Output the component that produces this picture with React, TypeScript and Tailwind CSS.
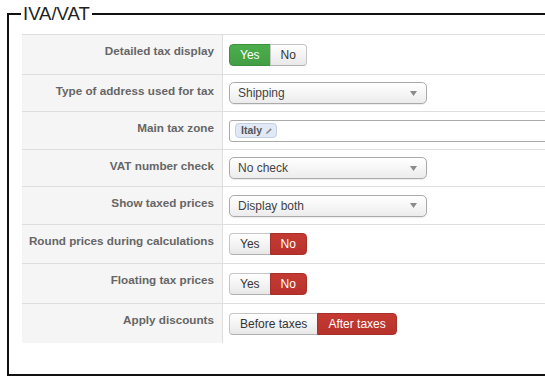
import React from "react";

type Control =
  | { kind: "toggle"; options: string[]; active: number; tone: "green" | "red" }
  | { kind: "select"; value: string }
  | { kind: "tags"; tags: string[] };

type Row = { label: string; h: string; control: Control };

const rows: Row[] = [
  { label: "Detailed tax display", h: "h-[40px]", control: { kind: "toggle", options: ["Yes", "No"], active: 0, tone: "green" } },
  { label: "Type of address used for tax", h: "h-[37px]", control: { kind: "select", value: "Shipping" } },
  { label: "Main tax zone", h: "h-[38px]", control: { kind: "tags", tags: ["Italy"] } },
  { label: "VAT number check", h: "h-[37px]", control: { kind: "select", value: "No check" } },
  { label: "Show taxed prices", h: "h-[38px]", control: { kind: "select", value: "Display both" } },
  { label: "Round prices during calculations", h: "h-[39px]", control: { kind: "toggle", options: ["Yes", "No"], active: 1, tone: "red" } },
  { label: "Floating tax prices", h: "h-[40px]", control: { kind: "toggle", options: ["Yes", "No"], active: 1, tone: "red" } },
  { label: "Apply discounts", h: "h-[40px]", control: { kind: "toggle", options: ["Before taxes", "After taxes"], active: 1, tone: "red" } },
];

function Toggle({ options, active, tone }: { options: string[]; active: number; tone: "green" | "red" }) {
  return (
    <div className="flex h-[22px]">
      {options.map((opt, i) => {
        const on = i === active;
        const first = i === 0;
        const last = i === options.length - 1;
        let cls = "flex items-center border px-[10px] text-[12px] leading-none ";
        cls += first ? "rounded-l-[4px] " : "-ml-px ";
        cls += last ? "rounded-r-[4px] " : "";
        if (on && tone === "green") cls += "border-[#3d8f3d] bg-gradient-to-b from-[#4cae4c] to-[#439e43] text-white";
        else if (on) cls += "border-[#a6302a] bg-gradient-to-b from-[#c53a33] to-[#b7322c] text-white";
        else cls += "border-[#c5c5c5] border-b-[#b0b0b0] bg-gradient-to-b from-[#ffffff] to-[#e8e8e8] text-[#333]";
        return (
          <span key={opt} className={cls}>
            {opt}
          </span>
        );
      })}
    </div>
  );
}

function Select({ value }: { value: string }) {
  return (
    <div className="flex h-[22px] w-[198px] items-center justify-between rounded-[5px] border border-[#aaa] bg-gradient-to-b from-[#ffffff] via-[#f6f6f6] to-[#ececec] pl-[8px] pr-[9px] text-[12px] text-[#444] shadow-[0_1px_1px_rgba(0,0,0,0.08)]">
      <span>{value}</span>
      <svg width="7" height="5" viewBox="0 0 7 5">
        <path d="M0 0 L7 0 L3.5 5 Z" fill="#8a8a8a" />
      </svg>
    </div>
  );
}

function Tags({ tags }: { tags: string[] }) {
  return (
    <div className="flex h-[22px] flex-1 items-center rounded-[3px] border border-[#aaa] bg-white pl-[5px]">
      {tags.map((t) => (
        <span
          key={t}
          className="flex h-[15px] items-center gap-[3px] rounded-[4px] border border-[#c3d0e6] bg-[#e2e9f6] pl-[5px] pr-[3px] text-[10.5px] font-bold text-[#555]"
        >
          {t}
          <svg width="8" height="8" viewBox="0 0 8 8">
            <path d="M1 7 L1.4 5.4 L5.6 1.2 L6.8 2.4 L2.6 6.6 Z" fill="#8c8c8c" />
          </svg>
        </span>
      ))}
    </div>
  );
}

export default function App() {
  return (
    <div className="h-[382px] w-[545px] overflow-hidden bg-white font-['Liberation_Sans',Arial,sans-serif]">
      <fieldset className="m-0 ml-[7px] w-[640px] border-2 border-[#111] pb-[31px] pl-[13px] pr-0 pt-[6px]">
        <legend className="-ml-px px-[2px] text-[18.5px] leading-[28px] text-[#222]">IVA/VAT</legend>
        <div className="flex flex-col">
          {rows.map((r) => (
            <div key={r.label} className={`flex border-t border-[#dedede] ${r.h}`}>
              <div className="w-[201px] shrink-0 border-r border-[#dedede] bg-[#f5f5f5] pr-[8px] pt-[9px] text-right text-[11.7px] font-bold leading-[14px] text-[#666]">
                {r.label}
              </div>
              <div className="flex flex-1 items-center pl-[6px]">
                {r.control.kind === "toggle" && (
                  <Toggle options={r.control.options} active={r.control.active} tone={r.control.tone} />
                )}
                {r.control.kind === "select" && <Select value={r.control.value} />}
                {r.control.kind === "tags" && <Tags tags={r.control.tags} />}
              </div>
            </div>
          ))}
        </div>
      </fieldset>
    </div>
  );
}
